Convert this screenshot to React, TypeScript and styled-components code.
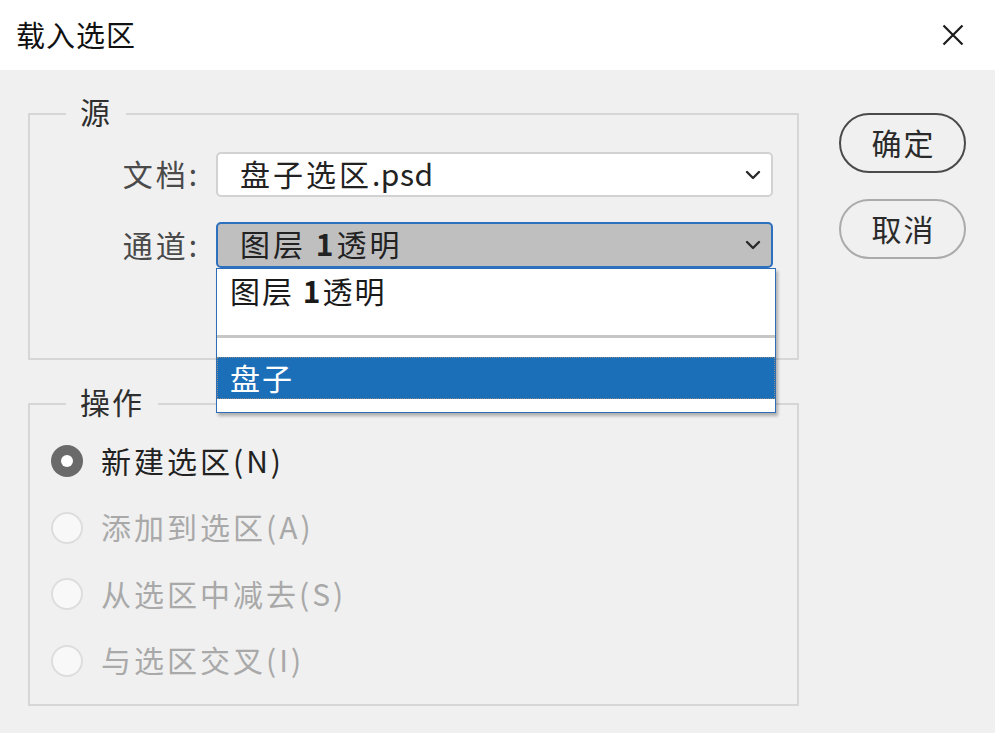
import React from "react";
import styled, { createGlobalStyle } from "styled-components";

const GlobalStyle = createGlobalStyle`
  html, body { margin: 0; padding: 0; background: #f0f0f0; }
  * { box-sizing: border-box; }
  body { font-family: "Noto Sans CJK SC", "Noto Sans", sans-serif; }
`;

const CJK = `"Noto Sans CJK SC", "Noto Sans", sans-serif`;

const Window = styled.div`
  width: 995px;
  height: 733px;
  background: #f0f0f0;
  display: flex;
  flex-direction: column;
  overflow: hidden;
`;

const TitleBar = styled.div`
  height: 70px;
  background: #ffffff;
  display: flex;
  align-items: center;
  justify-content: space-between;
  padding: 0 31px 0 16px;
  flex-shrink: 0;
`;

const Title = styled.div`
  font-family: ${CJK};
  font-size: 29px;
  line-height: 1;
  color: #111;
  letter-spacing: 1px;
  padding-bottom: 2px;
`;

const CloseButton = styled.div`
  width: 22px;
  height: 22px;
  display: flex;
  align-items: center;
  justify-content: center;
`;

const Body = styled.div`
  display: flex;
  flex-direction: row;
  padding: 30px 0 0 28px;
  gap: 40px;
`;

const LeftColumn = styled.div`
  width: 771px;
  display: flex;
  flex-direction: column;
  gap: 30px;
`;

const Group = styled.fieldset<{ $pt: number; $pb: number; $pl: number }>`
  margin: 0;
  border: 2px solid #d6d6d6;
  border-radius: 1px;
  padding: ${(p) => `${p.$pt}px 24px ${p.$pb}px ${p.$pl}px`};
  position: relative;
  min-width: 0;
`;

const Legend = styled.legend<{ $offset: number }>`
  margin-left: ${(p) => p.$offset}px;
  padding: 0 14px;
  font-family: ${CJK};
  font-size: 30px;
  line-height: 22px;
  height: 28px;
  color: #2e2e2e;
  letter-spacing: 2px;
`;

const FieldRow = styled.div`
  display: flex;
  align-items: center;
  gap: 16px;
  position: relative;
`;

const FieldRows = styled.div`
  display: flex;
  flex-direction: column;
  gap: 25px;
`;

const FieldLabel = styled.div`
  width: 170px;
  text-align: right;
  font-family: ${CJK};
  font-size: 30px;
  letter-spacing: 3px;
  color: #4a4a4a;
  line-height: 1;
  padding-bottom: 3px;
`;

const SelectBox = styled.div<{ $active?: boolean }>`
  width: 557px;
  height: ${(p) => (p.$active ? 46 : 45)}px;
  border-radius: 5px;
  border: ${(p) => (p.$active ? "2px solid #2c70bf" : "2px solid #d2d2d2")};
  background: ${(p) => (p.$active ? "#bfbfbf" : "#ffffff")};
  display: flex;
  align-items: center;
  justify-content: space-between;
  padding: 0 10px 0 22px;
  position: relative;
`;

const SelectText = styled.div`
  font-family: ${CJK};
  font-size: 30px;
  letter-spacing: 3px;
  color: #222;
  line-height: 1;
  padding-bottom: 4px;
`;

const Latin = styled.span`
  letter-spacing: 0.5px;
`;

const Bold = styled.span`
  font-weight: 700;
`;

const DropList = styled.div`
  position: absolute;
  top: 44px;
  left: -2px;
  width: 560px;
  background: #ffffff;
  border: 1px solid #2c6db5;
  box-shadow: 2px 3px 3px rgba(0, 0, 0, 0.28);
  display: flex;
  flex-direction: column;
  z-index: 10;
`;

const DropItem = styled.div<{ $h: number; $selected?: boolean }>`
  height: ${(p) => p.$h}px;
  padding: 6px 0 0 13px;
  font-family: ${CJK};
  font-size: 30px;
  line-height: 1;
  letter-spacing: 2px;
  color: ${(p) => (p.$selected ? "#ffffff" : "#1a1a1a")};
  background: ${(p) => (p.$selected ? "#1b6fb9" : "#ffffff")};
  border: ${(p) => (p.$selected ? "1px dotted #8a8a8a" : "none")};
  display: flex;
  align-items: ${(p) => (p.$selected ? "center" : "flex-start")};
  ${(p) => (p.$selected ? "padding: 0 0 3px 12px;" : "")}
`;

const DropSeparator = styled.div`
  height: 3px;
  background: #c6c6c6;
`;

const RadioList = styled.div`
  display: flex;
  flex-direction: column;
  gap: 26.5px;
`;

const RadioRow = styled.div`
  height: 40px;
  display: flex;
  align-items: center;
  gap: 18px;
`;

const RadioCircle = styled.div<{ $checked?: boolean }>`
  width: 32px;
  height: 32px;
  border-radius: 50%;
  background: ${(p) => (p.$checked ? "#6a6a6a" : "#f8f8f8")};
  border: ${(p) => (p.$checked ? "none" : "2px solid #dddddd")};
  display: flex;
  align-items: center;
  justify-content: center;
  &::after {
    content: "";
    display: ${(p) => (p.$checked ? "block" : "none")};
    width: 12px;
    height: 12px;
    border-radius: 50%;
    background: #ffffff;
  }
`;

const RadioLabel = styled.div<{ $disabled?: boolean }>`
  font-family: ${CJK};
  font-size: 30px;
  letter-spacing: 3px;
  line-height: 1;
  color: ${(p) => (p.$disabled ? "#a9a9a9" : "#222222")};
  padding-bottom: 3px;
`;

const ButtonColumn = styled.div`
  display: flex;
  flex-direction: column;
  gap: 26px;
  padding-top: 13px;
`;

const PillButton = styled.div<{ $primary?: boolean }>`
  width: 127px;
  height: 60px;
  border-radius: 30px;
  border: 2px solid ${(p) => (p.$primary ? "#4a4a4a" : "#ababab")};
  display: flex;
  align-items: center;
  justify-content: center;
  font-family: ${CJK};
  font-size: 30px;
  letter-spacing: 2px;
  color: #2a2a2a;
  line-height: 1;
  padding: 0 0 3px 2px;
`;

const Chevron = () => (
  <svg width="16" height="10" viewBox="0 0 16 10">
    <path d="M2 2 L8 8 L14 2" fill="none" stroke="#2a2a2a" strokeWidth="2.4" strokeLinecap="round" strokeLinejoin="round" />
  </svg>
);

const CloseIcon = () => (
  <svg width="22" height="22" viewBox="0 0 22 22">
    <path d="M1.5 1.5 L20.5 20.5 M20.5 1.5 L1.5 20.5" stroke="#1a1a1a" strokeWidth="2.2" />
  </svg>
);

const options = [
  { label: "添加到选区(A)" },
  { label: "从选区中减去(S)" },
  { label: "与选区交叉(I)" },
];

export default function App() {
  return (
    <Window>
      <GlobalStyle />
      <TitleBar>
        <Title>载入选区</Title>
        <CloseButton>
          <CloseIcon />
        </CloseButton>
      </TitleBar>
      <Body>
        <LeftColumn>
          <Group $pt={24} $pb={90} $pl={0}>
            <Legend $offset={36}>源</Legend>
            <FieldRows>
              <FieldRow>
                <FieldLabel>文档:</FieldLabel>
                <SelectBox>
                  <SelectText>
                    盘子选区<Latin>.psd</Latin>
                  </SelectText>
                  <Chevron />
                </SelectBox>
              </FieldRow>
              <FieldRow>
                <FieldLabel>通道:</FieldLabel>
                <SelectBox $active>
                  <SelectText>
                    图层 <Bold>1</Bold>透明
                  </SelectText>
                  <Chevron />
                  <DropList>
                    <DropItem $h={66}>
                      图层 <Bold>&nbsp;1</Bold>透明
                    </DropItem>
                    <DropSeparator />
                    <DropItem $h={19} />
                    <DropItem $h={42} $selected>
                      盘子
                    </DropItem>
                    <DropItem $h={13} />
                  </DropList>
                </SelectBox>
              </FieldRow>
            </FieldRows>
          </Group>
          <Group $pt={23} $pb={23} $pl={21}>
            <Legend $offset={15}>操作</Legend>
            <RadioList>
              <RadioRow>
                <RadioCircle $checked />
                <RadioLabel>新建选区(N)</RadioLabel>
              </RadioRow>
              {options.map((o) => (
                <RadioRow key={o.label}>
                  <RadioCircle />
                  <RadioLabel $disabled>{o.label}</RadioLabel>
                </RadioRow>
              ))}
            </RadioList>
          </Group>
        </LeftColumn>
        <ButtonColumn>
          <PillButton $primary>确定</PillButton>
          <PillButton>取消</PillButton>
        </ButtonColumn>
      </Body>
    </Window>
  );
}
